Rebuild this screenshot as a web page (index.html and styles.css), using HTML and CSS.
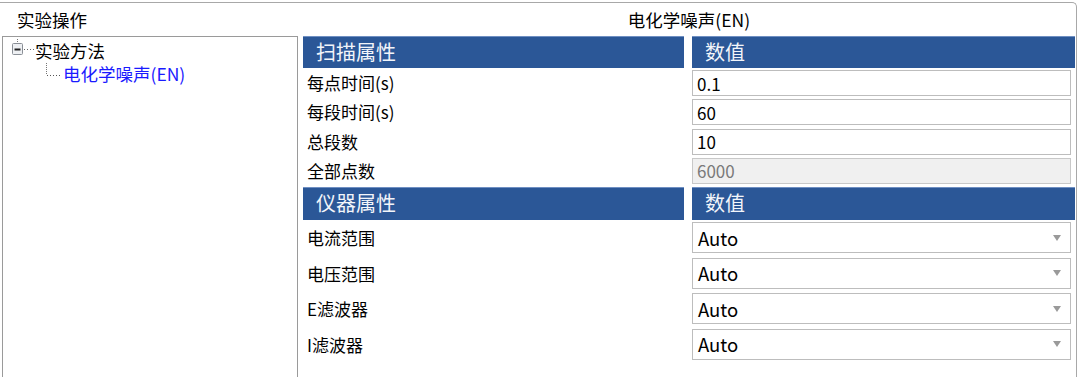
FILE: index.html
```html
<!DOCTYPE html>
<html lang="zh-CN">
  <head>
    <meta charset="utf-8" />
    <title>实验操作</title>
    <link rel="stylesheet" href="styles.css">
  </head>

  <body>
    <div class="group">
      <div class="group-title">实验操作</div>
      <div class="method-title">电化学噪声(EN)</div>

      <!-- method tree -->
      <div class="tree">
        <div class="tree-node">
          <svg class="tree-expander" width="24" height="23" viewBox="0 0 24 23">
            <line x1="6.5" y1="0" x2="6.5" y2="4" stroke="#777" stroke-dasharray="1 1"/>
            <rect x="1.5" y="4.5" width="10" height="11" rx="1" fill="#eef0f3" stroke="#8a8f96"/>
            <line x1="3.5" y1="10.5" x2="9.5" y2="10.5" stroke="#222" stroke-width="2"/>
            <line x1="13" y1="10.5" x2="23" y2="10.5" stroke="#666" stroke-dasharray="1 2"/>
          </svg>
          <span>实验方法</span>
        </div>
        <div class="tree-node child">
          <svg class="tree-branch" width="18" height="23" viewBox="0 0 18 23">
            <line x1="1.5" y1="1" x2="1.5" y2="13" stroke="#777" stroke-dasharray="1 1"/>
            <line x1="2" y1="13.5" x2="17" y2="13.5" stroke="#555" stroke-dasharray="1 2"/>
          </svg>
          <span>电化学噪声(EN)</span>
        </div>
      </div>

      <!-- property grid -->
      <div class="props">
        <div class="prop-row head">
          <div class="head-cell">扫描属性</div>
          <div class="head-cell">数值</div>
        </div>
        <div class="prop-row">
          <label>每点时间(s)</label>
          <input type="text" class="field" value="0.1">
        </div>
        <div class="prop-row">
          <label>每段时间(s)</label>
          <input type="text" class="field" value="60">
        </div>
        <div class="prop-row">
          <label>总段数</label>
          <input type="text" class="field" value="10">
        </div>
        <div class="prop-row">
          <label>全部点数</label>
          <input type="text" class="field" value="6000" disabled>
        </div>

        <div class="prop-row head second">
          <div class="head-cell">仪器属性</div>
          <div class="head-cell">数值</div>
        </div>
        <div class="prop-row combo-row">
          <label>电流范围</label>
          <div class="combo"><span>Auto</span><svg width="8" height="6" viewBox="0 0 8 6"><path d="M0 0H8L4 6Z" fill="#9a9a9a"/></svg></div>
        </div>
        <div class="prop-row combo-row">
          <label>电压范围</label>
          <div class="combo"><span>Auto</span><svg width="8" height="6" viewBox="0 0 8 6"><path d="M0 0H8L4 6Z" fill="#9a9a9a"/></svg></div>
        </div>
        <div class="prop-row combo-row">
          <label>E滤波器</label>
          <div class="combo"><span>Auto</span><svg width="8" height="6" viewBox="0 0 8 6"><path d="M0 0H8L4 6Z" fill="#9a9a9a"/></svg></div>
        </div>
        <div class="prop-row combo-row">
          <label>I滤波器</label>
          <div class="combo"><span>Auto</span><svg width="8" height="6" viewBox="0 0 8 6"><path d="M0 0H8L4 6Z" fill="#9a9a9a"/></svg></div>
        </div>
      </div>
    </div>
  </body>
</html>
```

FILE: styles.css
```css
* {
  box-sizing: border-box;
}
body, html {
  margin: 0;
  padding: 0;
  width: 100%;
  height: 100%;
  background: #fff;
  overflow: hidden;
}
body {
  font-family: "Noto Sans CJK SC", "Noto Sans", sans-serif;
  font-size: 17px;
  color: #000;
}
.group {
  margin-top: 2px;
  width: 1077px;
  height: 375px;
  border-top: 1px solid #a8a8a8;
  border-right: 1px solid #a8a8a8;
  border-top-right-radius: 5px;
  padding: 0 1px 0 2px;
  display: grid;
  grid-template-columns: 296px 1fr;
  grid-template-rows: 33px 1fr;
  column-gap: 5px;
}
.group-title {
  padding-left: 15px;
  line-height: 33px;
  font-size: 17.5px;
}
.method-title {
  text-align: center;
  line-height: 33px;
  font-size: 17.5px;
}

/* tree */
.tree {
  border: 1px solid #9a9a9a;
  border-bottom: none;
  padding: 2px 0 0 8px;
}
.tree-node {
  display: flex;
  align-items: center;
  height: 23px;
  font-size: 17.5px;
  line-height: 23px;
}
.tree-node.child {
  padding-left: 34px;
  color: #1a1aff;
}
.tree-expander, .tree-branch {
  flex: none;
}

/* property grid */
.props {
  display: flex;
  flex-direction: column;
}
.prop-row {
  display: grid;
  grid-template-columns: 381px 1fr;
  column-gap: 8px;
  align-items: start;
  height: 29.25px;
}
.prop-row label {
  padding-left: 4px;
  line-height: 26px;
  font-size: 17px;
  white-space: nowrap;
}
.prop-row.head {
  height: 32px;
  margin-bottom: 2px;
}
.prop-row.head.second {
  height: 33px;
}
.head-cell {
  height: 100%;
  background: #2b5797;
  border-top: 1px solid #6f8fc2;
  color: #f2f5fa;
  font-size: 20px;
  line-height: 30px;
  padding-left: 13px;
}
.field {
  height: 26px;
  margin: 0 4px 0 0;
  border: 1px solid #bdbdbd;
  padding: 0 4px;
  font-family: "Noto Sans CJK SC", "Noto Sans", sans-serif;
  font-size: 17px;
  color: #000;
  background: #fff;
  outline: none;
}
.field:disabled {
  background: #f0f0f0;
  color: #7a7a7a;
  border-color: #c8c8c8;
}
.combo-row {
  height: 35.5px;
}
.combo-row label {
  line-height: 31px;
}
.combo {
  height: 31px;
  margin-right: 4px;
  border: 1px solid #bdbdbd;
  padding: 0 9px 0 5px;
  display: flex;
  align-items: center;
  justify-content: space-between;
  font-size: 18.5px;
}
```
